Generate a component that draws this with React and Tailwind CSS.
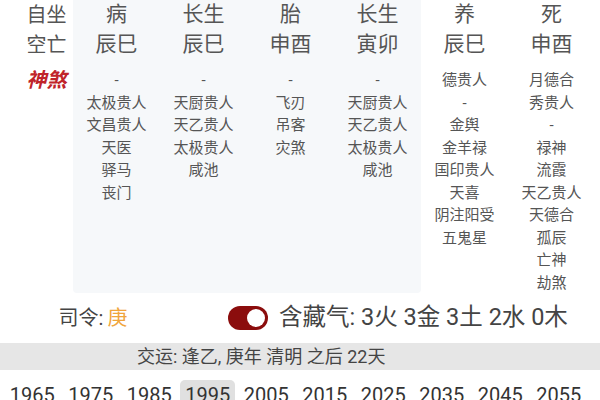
import React from "react";

const cols = [
  { zs: "病", kw: "辰巳", ss: ["-", "太极贵人", "文昌贵人", "天医", "驿马", "丧门"] },
  { zs: "长生", kw: "辰巳", ss: ["-", "天厨贵人", "天乙贵人", "太极贵人", "咸池"] },
  { zs: "胎", kw: "申酉", ss: ["-", "飞刃", "吊客", "灾煞"] },
  { zs: "长生", kw: "寅卯", ss: ["-", "天厨贵人", "天乙贵人", "太极贵人", "咸池"] },
  { zs: "养", kw: "辰巳", ss: ["德贵人", "-", "金舆", "金羊禄", "国印贵人", "天喜", "阴注阳受", "五鬼星"] },
  { zs: "死", kw: "申酉", ss: ["月德合", "秀贵人", "-", "禄神", "流霞", "天乙贵人", "天德合", "孤辰", "亡神", "劫煞"] },
];

const years = ["1965", "1975", "1985", "1995", "2005", "2015", "2025", "2035", "2045", "2055"];

function Column({ c }) {
  return (
    <div className="w-[87px] flex flex-col items-center">
      <div className="h-[30px] flex items-center text-[21px] text-[#555]">{c.zs}</div>
      <div className="h-[30px] flex items-center text-[21px] text-[#555]">{c.kw}</div>
      <div className="pt-[9px] flex flex-col items-center">
        {c.ss.map((s, i) => (
          <div key={i} className="h-[22.5px] leading-[22.5px] text-[15px] text-[#555] whitespace-nowrap">
            {s}
          </div>
        ))}
      </div>
    </div>
  );
}

export default function App() {
  return (
    <div
      className="w-[600px] h-[400px] overflow-hidden bg-white"
      style={{ fontFamily: 'Roboto, "Noto Sans CJK SC", sans-serif' }}
    >
      <div className="flex h-[293px]">
        <div className="w-[73px] flex flex-col items-center pl-[20px]">
          <div className="h-[30px] flex items-center text-[20px] text-[#555]">自坐</div>
          <div className="h-[30px] flex items-center text-[20px] text-[#555]">空亡</div>
          <div className="pt-[5px] text-[20px] leading-[30px] italic font-bold text-[#c0242a]">神煞</div>
        </div>
        <div className="flex bg-[#f6f8fa] rounded-b-[4px]">
          {cols.slice(0, 4).map((c, i) => (
            <Column key={i} c={c} />
          ))}
        </div>
        {cols.slice(4).map((c, i) => (
          <Column key={i} c={c} />
        ))}
      </div>

      <div className="h-[50px] flex items-center">
        <div className="w-[186px] flex justify-center text-[20px] text-[#444]">
          司令: <span className="text-[#f0a53c] ml-[4px]">庚</span>
        </div>
        <div className="ml-[42px] w-[40px] h-[24px] rounded-full bg-[#8b0d0d] flex items-center justify-end pr-[3px]">
          <div className="w-[18px] h-[18px] rounded-full bg-white" />
        </div>
        <div className="ml-[11px] text-[23.5px] text-[#444] whitespace-nowrap">含藏气: 3火 3金 3土 2水 0木</div>
      </div>

      <div className="h-[27px] bg-[#e6e6e6] flex items-center pl-[137px] text-[18px] text-[#444] whitespace-nowrap">
        交运: 逢乙, 庚年 清明 之后 22天
      </div>

      <div className="flex pl-[3px] pt-[10px]">
        {years.map((y) => (
          <div key={y} className="w-[58.5px] flex justify-center">
            <div
              className={
                y === "1995"
                  ? "px-[5px] rounded-[5px] bg-[#e0e0e0] text-[20px] leading-[30px] text-[#333] h-[30px]"
                  : "px-[5px] text-[20px] leading-[30px] text-[#333] h-[30px]"
              }
            >
              {y}
            </div>
          </div>
        ))}
      </div>
    </div>
  );
}
